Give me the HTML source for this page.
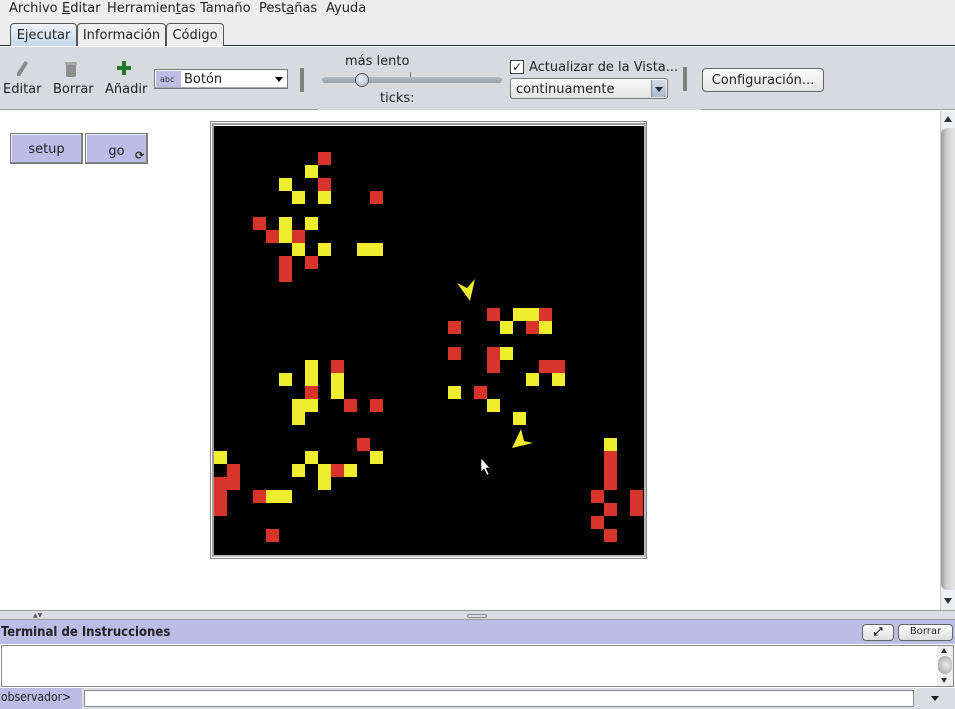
<!DOCTYPE html>
<html><head><meta charset="utf-8"><style>
*{margin:0;padding:0;box-sizing:border-box}
body{width:955px;height:709px;overflow:hidden;background:#fff;font-family:"DejaVu Sans","Liberation Sans",sans-serif;font-size:13px;color:#222;position:relative}
.a{position:absolute}
#menu{left:0;top:0;width:955px;height:20px;background:#ededed;}
#menu span{position:absolute;top:1px;font-size:13px}
#tabsrow{left:0;top:20px;width:955px;height:26px;background:#ededed;border-bottom:1px solid #2a3040}
.tab{position:absolute;top:3px;height:23px;border:1px solid #555;border-bottom:none;border-radius:4px 4px 0 0;background:#eee;font-size:13px;padding:4px 0 0 0;text-align:center}
#tb{left:0;top:47px;width:955px;height:63px;background:#d8dae0}
.lbl{position:absolute;font-size:13px}
.sep{position:absolute;width:4px;height:24px;background:#808080}
#grid{left:214px;top:126px;width:430px;height:429px;background:#000;display:grid;grid-template-columns:repeat(33,13px);grid-template-rows:repeat(33,13px)}
.r{background:#d7342b}.y{background:#eeee2e}
.btn{position:absolute;background:#bcbce6;border:1px solid #777;box-shadow:inset -1px -1px 0 #888,inset 1px 1px 0 #eef;font-size:13px;text-align:center}
</style></head><body>
<div id="menu" class="a">
<span style="left:9px">Archivo</span><span style="left:62px"><u>E</u>ditar</span><span style="left:107px">Herramien<u>t</u>as</span><span style="left:200px">Tamaño</span><span style="left:259px">Pest<u>a</u>ñas</span><span style="left:326px">Ayuda</span>
</div>
<div id="tabsrow" class="a">
<div class="tab" style="left:10px;width:67px;background:linear-gradient(#eef3f8,#c3d8ea)">Ejecutar</div>
<div class="tab" style="left:77px;width:89px">Información</div>
<div class="tab" style="left:166px;width:58px">Código</div>
</div>
<div id="tb" class="a">
<svg class="a" style="left:15px;top:13px" width="14" height="18"><path d="M10 1 L13 3 L5 16 L2 16 L2 13 Z" fill="#8a8a8a"/></svg>
<svg class="a" style="left:64px;top:14px" width="14" height="18"><rect x="2" y="3" width="10" height="13" rx="2" fill="#8e8e8e"/><rect x="1" y="1" width="12" height="3" rx="1" fill="#a5a5a5"/></svg>
<svg class="a" style="left:117px;top:14px" width="15" height="15"><rect x="5" y="0" width="4" height="14" fill="#1e7a2a"/><rect x="0" y="5" width="14" height="4" fill="#1e7a2a"/></svg>
<div class="lbl" style="left:3px;top:35px">Editar</div>
<div class="lbl" style="left:53px;top:35px">Borrar</div>
<div class="lbl" style="left:105px;top:35px">Añadir</div>
<div class="a" style="left:154px;top:22px;width:134px;height:20px;background:#fff;border:1px solid #777;box-shadow:inset 0 -1px 0 #aaa">
 <div class="a" style="left:1px;top:1px;width:25px;height:16px;background:#bcbce6;font-size:8px;padding:4px 0 0 4px;color:#333">abc</div>
 <div class="a" style="left:29px;top:2px;font-size:13px">Botón</div>
 <div class="a" style="left:120px;top:7px;border-left:4px solid transparent;border-right:4px solid transparent;border-top:5px solid #000"></div>
</div>
<div class="sep" style="left:300px;top:21px"></div>
<div class="lbl" style="left:345px;top:7px">más lento</div>
<div class="a" style="left:322px;top:30px;width:180px;height:6px;border-radius:3px;background:linear-gradient(#b8bcc4,#999ea8)"></div>
<div class="a" style="left:410px;top:25px;width:1px;height:5px;background:#777"></div>
<div class="a" style="left:355px;top:26px;width:14px;height:14px;border-radius:7px;border:1px solid #556;background:radial-gradient(circle at 40% 35%,#e8eef6,#a8b6c8)"></div>
<div class="lbl" style="left:380px;top:44px">ticks:</div>
<div class="a" style="left:510px;top:13px;width:14px;height:14px;border:1px solid #444;background:#fff;font-size:12px;line-height:12px;text-align:center;font-weight:bold">✓</div>
<div class="lbl" style="left:529px;top:13px">Actualizar de la Vista...</div>
<div class="a" style="left:510px;top:31px;width:158px;height:21px;border:1px solid #777;border-radius:3px;background:linear-gradient(#fbfbfb,#e2e2e2)">
 <div class="a" style="left:5px;top:3px">continuamente</div>
 <div class="a" style="left:140px;top:1px;width:15px;height:17px;background:linear-gradient(#d4dcea,#a9b8cf);border-left:1px solid #889"></div>
 <div class="a" style="left:144px;top:8px;border-left:4px solid transparent;border-right:4px solid transparent;border-top:5px solid #223"></div>
</div>
<div class="sep" style="left:683px;top:20px"></div>
<div class="a" style="left:702px;top:21px;width:122px;height:24px;border:1px solid #666;border-radius:4px;background:linear-gradient(#fbfbfb,#e3e3e3);text-align:center;padding-top:4px">Configuración...</div>
</div>
<div class="a" style="left:0;top:109px;width:318px;height:1px;background:#9a9ca2"></div>
<div class="a" style="left:701px;top:109px;width:254px;height:1px;background:#9a9ca2"></div>

<div class="btn" style="left:10px;top:133px;width:73px;height:31px;padding-top:8px">setup</div>
<div class="btn" style="left:85px;top:133px;width:63px;height:31px;padding-top:10px">go<span class="a" style="left:49px;top:15px;font-size:11px;font-weight:bold">⟳</span></div>

<div class="a" style="left:210px;top:121px;width:437px;height:438px;border:1px solid #8a8a8a;background:#fff"></div>
<div class="a" style="left:212px;top:123px;width:434px;height:434px;border:2px solid #9b9b9b;border-right-color:#bbb;border-bottom-color:#bbb"></div>
<div id="grid" class="a">
<i class="r" style="grid-area:3/9"></i><i class="r" style="grid-area:5/9"></i><i class="r" style="grid-area:6/13"></i><i class="r" style="grid-area:8/4"></i><i class="r" style="grid-area:9/5"></i><i class="r" style="grid-area:9/7"></i><i class="r" style="grid-area:11/6"></i><i class="r" style="grid-area:12/6"></i><i class="r" style="grid-area:11/8"></i>
<i class="r" style="grid-area:15/22"></i><i class="r" style="grid-area:15/26"></i><i class="r" style="grid-area:16/19"></i><i class="r" style="grid-area:16/25"></i><i class="r" style="grid-area:18/19"></i><i class="r" style="grid-area:18/22"></i><i class="r" style="grid-area:19/22"></i><i class="r" style="grid-area:19/26"></i><i class="r" style="grid-area:19/27"></i><i class="r" style="grid-area:21/21"></i>
<i class="r" style="grid-area:21/8"></i><i class="r" style="grid-area:19/10"></i><i class="r" style="grid-area:22/11"></i><i class="r" style="grid-area:22/13"></i><i class="r" style="grid-area:25/12"></i><i class="r" style="grid-area:27/2"></i><i class="r" style="grid-area:27/10"></i><i class="r" style="grid-area:28/1"></i><i class="r" style="grid-area:28/2"></i><i class="r" style="grid-area:29/1"></i><i class="r" style="grid-area:30/1"></i><i class="r" style="grid-area:29/4"></i><i class="r" style="grid-area:32/5"></i>
<i class="r" style="grid-area:26/31"></i><i class="r" style="grid-area:27/31"></i><i class="r" style="grid-area:28/31"></i><i class="r" style="grid-area:29/30"></i><i class="r" style="grid-area:29/33"></i><i class="r" style="grid-area:30/33"></i><i class="r" style="grid-area:30/31"></i><i class="r" style="grid-area:31/30"></i><i class="r" style="grid-area:32/31"></i>
<i class="y" style="grid-area:4/8"></i><i class="y" style="grid-area:5/6"></i><i class="y" style="grid-area:6/7"></i><i class="y" style="grid-area:6/9"></i><i class="y" style="grid-area:8/6"></i><i class="y" style="grid-area:9/6"></i><i class="y" style="grid-area:8/8"></i><i class="y" style="grid-area:10/7"></i><i class="y" style="grid-area:10/9"></i><i class="y" style="grid-area:10/12"></i><i class="y" style="grid-area:10/13"></i>
<i class="y" style="grid-area:15/24"></i><i class="y" style="grid-area:15/25"></i><i class="y" style="grid-area:16/23"></i><i class="y" style="grid-area:16/26"></i><i class="y" style="grid-area:18/23"></i><i class="y" style="grid-area:20/25"></i><i class="y" style="grid-area:20/27"></i><i class="y" style="grid-area:21/19"></i><i class="y" style="grid-area:22/22"></i><i class="y" style="grid-area:23/24"></i>
<i class="y" style="grid-area:19/8"></i><i class="y" style="grid-area:20/8"></i><i class="y" style="grid-area:22/7"></i><i class="y" style="grid-area:22/8"></i><i class="y" style="grid-area:23/7"></i><i class="y" style="grid-area:20/10"></i><i class="y" style="grid-area:21/10"></i><i class="y" style="grid-area:20/6"></i><i class="y" style="grid-area:26/1"></i><i class="y" style="grid-area:26/8"></i><i class="y" style="grid-area:26/13"></i><i class="y" style="grid-area:27/7"></i><i class="y" style="grid-area:27/9"></i><i class="y" style="grid-area:28/9"></i><i class="y" style="grid-area:27/11"></i><i class="y" style="grid-area:29/5"></i><i class="y" style="grid-area:29/6"></i><i class="y" style="grid-area:25/31"></i>
</div>
<svg class="a" style="left:0;top:0" width="955" height="709">
<polygon points="457,283 467,288 475,279 470,301" fill="#eeee2e"/>
<polygon points="521,429 524,441 533,443 512,448" fill="#eeee2e"/>
<polygon points="481,458 481,472 484,469 487,475 489,474 486,468 490,468" fill="#fff" stroke="#000" stroke-width="0.6"/>
</svg>

<div class="a" style="left:940px;top:111px;width:15px;height:499px;background:#eef0f3;border-left:1px solid #ccc"></div>
<div class="a" style="left:944px;top:116px;border-left:4px solid transparent;border-right:4px solid transparent;border-bottom:6px solid #333"></div>
<div class="a" style="left:941px;top:128px;width:14px;height:462px;border-radius:6px 0 0 6px;background:linear-gradient(90deg,#9a9a9a,#d0d0d0 40%,#e6e6e6)"></div>
<div class="a" style="left:944px;top:598px;border-left:4px solid transparent;border-right:4px solid transparent;border-top:6px solid #333"></div>

<div class="a" style="left:0;top:610px;width:955px;height:10px;background:#dcdde2;border-top:1px solid #999;border-bottom:1px solid #999"></div>
<div class="a" style="left:33px;top:612px;font-size:6px;color:#555">▲▼</div>
<div class="a" style="left:467px;top:614px;width:20px;height:4px;border:1px solid #888;border-radius:2px"></div>
<div class="a" style="left:0;top:620px;width:955px;height:24px;background:#bcbce6"></div>
<div class="a" style="left:1px;top:625px;font-size:13px;font-weight:bold;font-family:'DejaVu Sans Condensed','DejaVu Sans',sans-serif;color:#222">Terminal de Instrucciones</div>
<div class="a" style="left:862px;top:624px;width:32px;height:17px;border:1px solid #666;border-radius:4px;background:linear-gradient(#fff,#ddd);font-size:11px;text-align:center;font-weight:bold">⤢</div>
<div class="a" style="left:898px;top:624px;width:55px;height:17px;border:1px solid #666;border-radius:4px;background:linear-gradient(#fff,#ddd);font-size:10px;text-align:center;padding-top:1px">Borrar</div>
<div class="a" style="left:1px;top:645px;width:953px;height:42px;border:1px solid #888;background:#fff"></div>
<div class="a" style="left:937px;top:646px;width:16px;height:40px;background:#eceef2"></div>
<div class="a" style="left:941px;top:648px;border-left:3px solid transparent;border-right:3px solid transparent;border-bottom:5px solid #333"></div>
<div class="a" style="left:938px;top:656px;width:14px;height:18px;border-radius:7px;background:radial-gradient(circle at 60% 50%,#eee,#999)"></div>
<div class="a" style="left:941px;top:678px;border-left:3px solid transparent;border-right:3px solid transparent;border-top:5px solid #333"></div>
<div class="a" style="left:0;top:688px;width:82px;height:21px;background:#bcbce6;font-size:12px;padding:2px 0 0 1px;font-family:'DejaVu Sans Condensed','DejaVu Sans',sans-serif">observador&gt;</div>
<div class="a" style="left:82px;top:688px;width:873px;height:21px;background:#dcdde2"></div>
<div class="a" style="left:84px;top:690px;width:830px;height:17px;border:1px solid #888;background:#fff"></div>
<div class="a" style="left:931px;top:696px;border-left:4px solid transparent;border-right:4px solid transparent;border-top:5px solid #222"></div>
</body></html>
